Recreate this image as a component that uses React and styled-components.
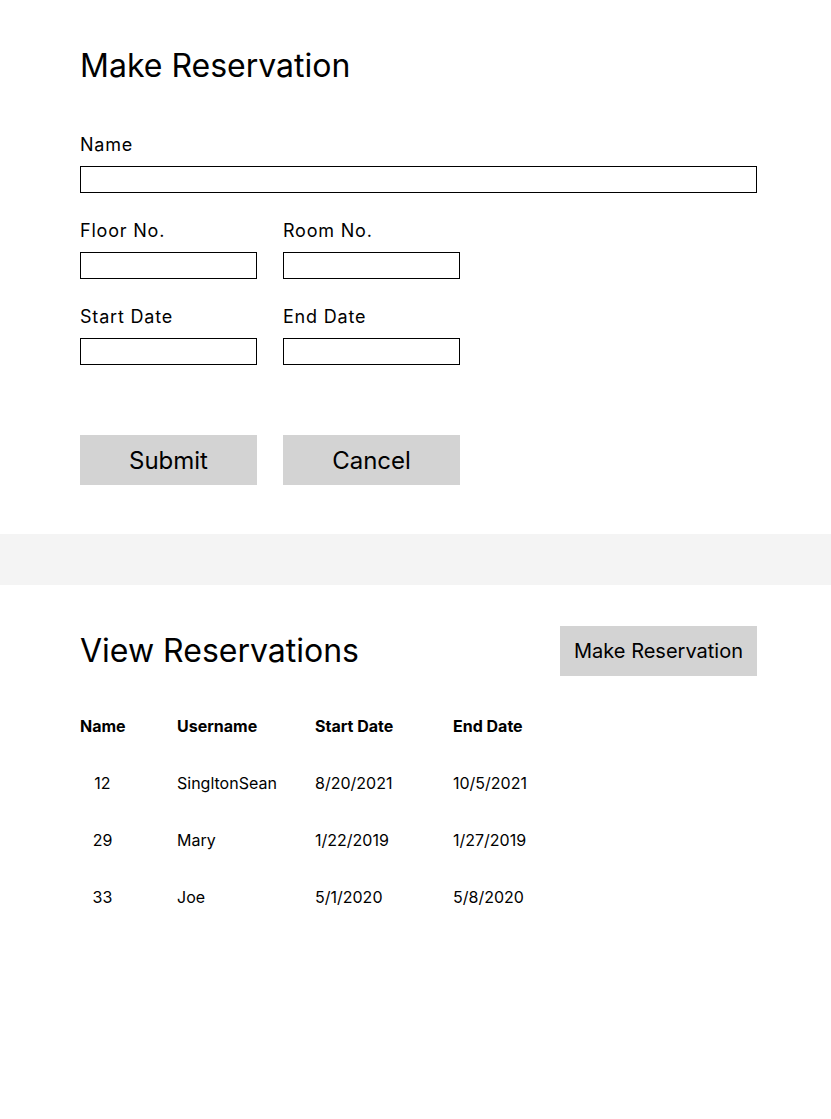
import React from "react";
import styled, { createGlobalStyle } from "styled-components";

const Global = createGlobalStyle`
  html, body { margin: 0; padding: 0; background: #fff; }
  body { font-family: Inter, "Noto Sans", sans-serif; color: #000; }
  * { box-sizing: border-box; }
`;

const Page = styled.div`
  width: 831px;
  min-height: 1119px;
  background: #fff;
`;

const Section = styled.section`
  width: 757px;
  padding: ${(p) => p.$pad};
  padding-left: 80px;
`;

const Title = styled.h1`
  margin: 0;
  font-size: 32px;
  line-height: 40px;
  font-weight: 400;
`;

const Form = styled.form`
  display: flex;
  flex-direction: column;
  margin-top: 47px;
`;

const FieldRow = styled.div`
  display: flex;
  gap: 26px;
  margin-bottom: 26px;
`;

const Field = styled.label`
  display: flex;
  flex-direction: column;
  gap: 10px;
  width: ${(p) => p.$width};
`;

const LabelText = styled.span`
  font-size: 18px;
  line-height: 22px;
  letter-spacing: 0.8px;
  padding-top: 1px;
`;

const Input = styled.input`
  width: 100%;
  height: 27px;
  border: 1px solid #000;
  border-radius: 0;
  padding: 0 4px;
  font: inherit;
  font-size: 14px;
  outline: none;
  background: #fff;
`;

const ButtonRow = styled.div`
  display: flex;
  gap: 26px;
  margin-top: 44px;
`;

const Button = styled.button`
  height: 50px;
  width: ${(p) => p.$width || "auto"};
  padding: ${(p) => (p.$width ? "0" : "0 14px")};
  background: #d3d3d3;
  border: none;
  border-radius: 0;
  font-family: Inter, "Noto Sans", sans-serif;
  font-size: ${(p) => p.$size};
  color: #000;
  cursor: pointer;
`;

const Band = styled.div`
  height: 51px;
  background: #f4f4f4;
  margin-top: 49px;
`;

const HeaderBar = styled.div`
  display: flex;
  justify-content: space-between;
  align-items: center;
  height: 50px;
  margin-top: 41px;
`;

const Table = styled.div`
  display: grid;
  grid-template-columns: 97px 138px 138px 1fr;
  grid-auto-rows: 57px;
  align-items: center;
  margin-top: 21px;
`;

const Cell = styled.div`
  font-size: 16px;
  line-height: 20px;
  font-weight: ${(p) => (p.$head ? 700 : 400)};
  width: ${(p) => (p.$num ? "45px" : "auto")};
  text-align: ${(p) => (p.$num ? "center" : "left")};
`;

const rows = [
  ["12", "SingltonSean", "8/20/2021", "10/5/2021"],
  ["29", "Mary", "1/22/2019", "1/27/2019"],
  ["33", "Joe", "5/1/2020", "5/8/2020"],
];

export default function App() {
  return (
    <Page>
      <Global />
      <Section $pad="46px 0 0 0">
        <Title>Make Reservation</Title>
        <Form onSubmit={(e) => e.preventDefault()}>
          <FieldRow>
            <Field $width="677px">
              <LabelText>Name</LabelText>
              <Input />
            </Field>
          </FieldRow>
          <FieldRow>
            <Field $width="177px">
              <LabelText>Floor No.</LabelText>
              <Input />
            </Field>
            <Field $width="177px">
              <LabelText>Room No.</LabelText>
              <Input />
            </Field>
          </FieldRow>
          <FieldRow>
            <Field $width="177px">
              <LabelText>Start Date</LabelText>
              <Input />
            </Field>
            <Field $width="177px">
              <LabelText>End Date</LabelText>
              <Input />
            </Field>
          </FieldRow>
          <ButtonRow>
            <Button type="submit" $width="177px" $size="24px">Submit</Button>
            <Button type="button" $width="177px" $size="24px">Cancel</Button>
          </ButtonRow>
        </Form>
      </Section>
      <Band />
      <Section $pad="0">
        <HeaderBar>
          <Title as="h2">View Reservations</Title>
          <Button type="button" $size="20px">Make Reservation</Button>
        </HeaderBar>
        <Table>
          <Cell $head>Name</Cell>
          <Cell $head>Username</Cell>
          <Cell $head>Start Date</Cell>
          <Cell $head>End Date</Cell>
          {rows.map((r) => (
            <React.Fragment key={r[0]}>
              <Cell $num>{r[0]}</Cell>
              <Cell>{r[1]}</Cell>
              <Cell>{r[2]}</Cell>
              <Cell>{r[3]}</Cell>
            </React.Fragment>
          ))}
        </Table>
      </Section>
    </Page>
  );
}
